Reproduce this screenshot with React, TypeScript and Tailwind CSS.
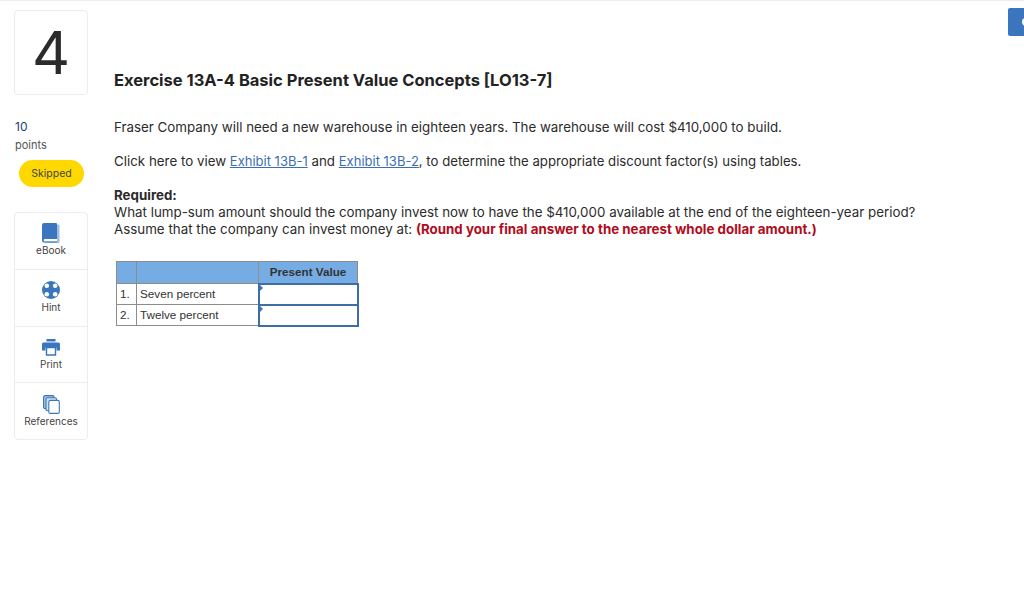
function BookIcon() {
  return (
    <svg width="18" height="20" viewBox="0 0 18 20">
      <path d="M15 1.5h1.5a1 1 0 0 1 1 1V19a1 1 0 0 1-1 1H3v-1.5h12z" fill="#9dbde2" />
      <path d="M2 0h12a1 1 0 0 1 1 1v15H3a1.3 1.3 0 0 0 0 2.6h12v.9H2a2 2 0 0 1-2-2V2a2 2 0 0 1 2-2z" fill="#3a75bd" />
    </svg>
  );
}

function HintIcon() {
  return (
    <svg width="18" height="18" viewBox="0 0 18 18">
      <circle cx="9" cy="9" r="9" fill="#3a75bd" />
      <circle cx="4.8" cy="4.8" r="2.3" fill="#fff" />
      <circle cx="13.2" cy="4.8" r="2.3" fill="#fff" />
      <circle cx="4.8" cy="13.2" r="2.3" fill="#fff" />
      <circle cx="13.2" cy="13.2" r="2.3" fill="#fff" />
    </svg>
  );
}

function PrintIcon() {
  return (
    <svg width="18" height="18" viewBox="0 0 18 18">
      <path d="M4.5 1h9v2.5h-9z" fill="#3a75bd" />
      <path d="M1.5 4.5h15A1.5 1.5 0 0 1 18 6v6.5h-3.5V9.5h-11v3H0V6a1.5 1.5 0 0 1 1.5-1.5z" fill="#3a75bd" />
      <path d="M4.5 9.5h9v7.5h-9z" fill="#fff" stroke="#3a75bd" strokeWidth="1.4" />
    </svg>
  );
}

function RefsIcon() {
  return (
    <svg width="17" height="19" viewBox="0 0 17 19">
      <rect x=".6" y=".6" width="10.5" height="13" rx="1.5" fill="#a9c4e4" stroke="#3a75bd" strokeWidth="1.1" />
      <rect x="3" y="2.8" width="10.5" height="13" rx="1.5" fill="#d4e2f2" stroke="#3a75bd" strokeWidth="1.1" />
      <rect x="5.8" y="5.4" width="10.5" height="13" rx="1.5" fill="#fff" stroke="#3a75bd" strokeWidth="1.1" />
    </svg>
  );
}

const tools = [
  { label: "eBook", icon: <BookIcon />, box: "h-[57px] pt-[10px]" },
  { label: "Hint", icon: <HintIcon />, box: "h-[57px] pt-[10px]" },
  { label: "Print", icon: <PrintIcon />, box: "h-[56px] pt-[10px]" },
  { label: "References", icon: <RefsIcon />, box: "h-[56px] pt-[11px]" },
];

function Row({ n, label }: { n: string; label: string }) {
  return (
    <tr className="h-[21px]">
      <td className="w-[20px] border border-[#8c8c8c] pl-[3px] align-middle">{n}</td>
      <td className="w-[122px] border border-[#8c8c8c] pl-[3px] align-middle">{label}</td>
      <td className="relative w-[99px] border-2 border-[#3f6da6] bg-white p-0">
        <span className="absolute left-0 top-0 h-0 w-0 border-y-[3px] border-l-[3px] border-y-transparent border-l-[#3a75bd]" />
      </td>
    </tr>
  );
}

export default function App() {
  return (
    <div className="relative flex h-[614px] w-[1024px] overflow-hidden border-t border-[#ececec] bg-white font-['Inter',sans-serif] text-[#2b2b2b]">
      <button className="absolute right-0 top-[7px] flex h-[28px] w-[16px] items-center overflow-hidden rounded-l-[2px] bg-[#3a75bd]">
        <span className="ml-[14px] h-[8px] w-[8px] shrink-0 rounded-full bg-white" />
      </button>

      <aside className="ml-[14px] mt-[9px] flex w-[74px] flex-col">
        <div className="flex h-[85px] items-center justify-center rounded-[4px] border border-[#ececec] text-[59px] font-normal leading-none">
          4
        </div>
        <div className="ml-[1px] mt-[25px] text-[12px] leading-[14px] text-[#1d3f72]">10</div>
        <div className="ml-[1px] mt-[4px] text-[11px] leading-[14px] text-[#555]">points</div>
        <div className="ml-[5px] mt-[8px] flex h-[27px] w-[65px] items-center justify-center rounded-full bg-[#ffd800] text-[10.5px] text-[#444]">
          Skipped
        </div>
        <div className="mt-[25px] flex flex-col rounded-[4px] border border-[#ececec]">
          {tools.map((t, i) => (
            <div
              key={t.label}
              className={`flex ${t.box} flex-col items-center ` + (i < tools.length - 1 ? "border-b border-[#ececec]" : "")}
            >
              <div className="flex h-[20px] items-center">{t.icon}</div>
              <div className="text-[10px] leading-[14px] text-[#444]">{t.label}</div>
            </div>
          ))}
        </div>
      </aside>

      <main className="ml-[26px] flex-1">
        <h1 className="mt-[68px] text-[16.5px] font-bold leading-[22px] text-[#222]">
          Exercise 13A-4 Basic Present Value Concepts [LO13-7]
        </h1>
        <div className="mt-[28px] text-[13.35px] leading-[17px]">
          <p>Fraser Company will need a new warehouse in eighteen years. The warehouse will cost $410,000 to build.</p>
          <p className="mt-[17px]">
            Click here to view <a className="text-[13px] text-[#3a6fb5] underline">Exhibit 13B-1</a> and{" "}
            <a className="text-[13px] text-[#3a6fb5] underline">Exhibit 13B-2</a>
            <span className="text-[13.2px]">, to determine the appropriate discount factor(s) using tables.</span>
          </p>
          <p className="mt-[17px] font-bold">Required:</p>
          <p>What lump-sum amount should the company invest now to have the $410,000 available at the end of the eighteen-year period?</p>
          <p>
            Assume that the company can invest money at: <b className="text-[#b00c1c]">(Round your final answer to the nearest whole dollar amount.)</b>
          </p>
        </div>
        <table className="ml-[2px] mt-[23px] border-collapse font-['Liberation_Sans',sans-serif] text-[11.7px] text-[#333]">
          <tbody>
            <tr className="h-[22px] bg-[#75ace3]">
              <td className="w-[20px] border border-[#8c8c8c]" />
              <td className="w-[122px] border border-[#8c8c8c]" />
              <td className="w-[99px] border border-[#8c8c8c] text-center font-bold">Present Value</td>
            </tr>
            <Row n="1." label="Seven percent" />
            <Row n="2." label="Twelve percent" />
          </tbody>
        </table>
      </main>
    </div>
  );
}
